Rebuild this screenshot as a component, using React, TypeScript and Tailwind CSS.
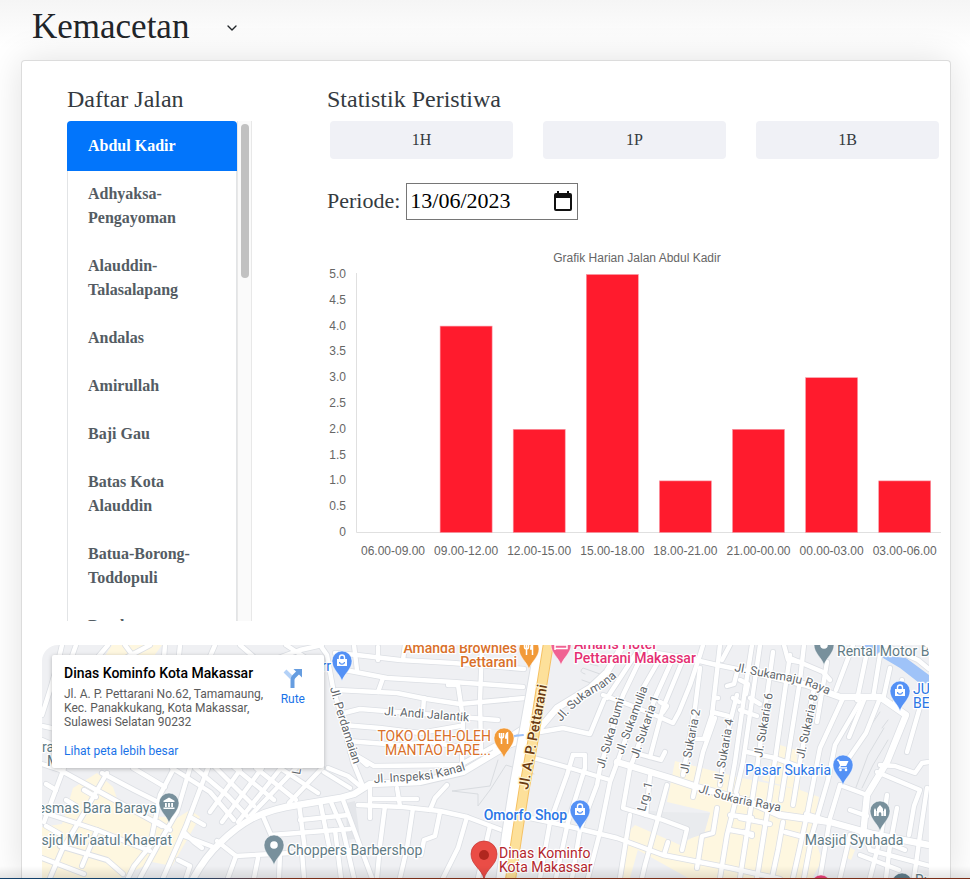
import React, { useState } from "react";
import { ChevronDown } from "lucide-react";

const streets = [
  "Abdul Kadir",
  "Adhyaksa-Pengayoman",
  "Alauddin-Talasalapang",
  "Andalas",
  "Amirullah",
  "Baji Gau",
  "Batas Kota Alauddin",
  "Batua-Borong-Toddopuli",
  "Batalyon",
];

const data = [
  { label: "06.00-09.00", value: 0 },
  { label: "09.00-12.00", value: 4 },
  { label: "12.00-15.00", value: 2 },
  { label: "15.00-18.00", value: 5 },
  { label: "18.00-21.00", value: 1 },
  { label: "21.00-00.00", value: 2 },
  { label: "00.00-03.00", value: 3 },
  { label: "03.00-06.00", value: 1 },
];

const ticks = ["0", "0.5", "1.0", "1.5", "2.0", "2.5", "3.0", "3.5", "4.0", "4.5", "5.0"];

function BarChart() {
  const left = 29;
  const bottom = 286;
  const step = 25.8;
  const band = 73.1;
  return (
    <svg viewBox="0 0 615 316" className="mt-[26px] block w-full font-['Liberation_Sans',Arial,sans-serif] text-xs" role="img" aria-label="Grafik Harian">
      <text x="310" y="16" textAnchor="middle" fill="#666">Grafik Harian Jalan Abdul Kadir</text>
      {ticks.map((t, i) => (
        <text key={t} x="19" y={bottom + 4 - i * step} textAnchor="end" fill="#666">{t}</text>
      ))}
      <path d="M29.5 27V286.5H614" stroke="#e0e0e0" fill="none" />
      {data.map((d, i) => {
        const cx = left + 37 + i * band;
        return (
          <g key={d.label}>
            {d.value > 0 && (
              <rect x={cx - 26} y={bottom + 0.5 - d.value * 2 * step} width="52" height={d.value * 2 * step} fill="#ff1b2d" stroke="#f99aa6" strokeWidth="0.6" />
            )}
            <text x={cx} y="309" textAnchor="middle" fill="#666">{d.label}</text>
          </g>
        );
      })}
    </svg>
  );
}

const minorRoads = [
  // west of the canal
  "M42 764L60 770L80 781L120 803L162 826", "M62 645L58 662L50 690L42 715", "M76 645L70 662", "M108 645L92 664", "M125 645L142 668", "M165 645L163 670", "M180 645L178 665",
  "M150 645L118 662", "M215 645L205 668", "M240 645L262 664L300 650L322 645", "M286 645L312 662",
  "M42 740L56 746", "M42 726L60 730", "M64 768L52 800L44 822", "M42 812L73 822L97 830L150 851", "M102 773L134 790L160 803",
  "M107 773L84 813L62 850L50 878", "M133 768L165 787", "M174 768L160 795L150 846L134 866L128 878", "M42 858L84 874", "M60 846L107 860L123 874",
  "M97 830L82 866", "M190 768L177 812L158 845L140 878", "M208 768L186 826L163 878", "M172 768L210 792L234 820", "M195 768L228 796L247 816",
  "M215 767L254 806", "M234 767L274 800", "M256 768L296 800", "M280 768L318 793",
  "M210 812L240 770", "M222 822L262 768", "M238 822L281 768", "M251 815L296 768", "M289 803L322 768",
  "M324 772L350 788", "M190 817L204 825", "M184 832L194 842L202 848", "M158 822L170 830", "M184 836L216 848",
  "M46 784L56 790", "M84 790L96 797", "M66 800L76 806", "M46 826L60 834",
  "M217 841L236 856L228 878", "M236 856L290 853L354 850", "M258 858L254 878", "M280 854L279 878", "M302 852L304 878", "M262 814L271 835L350 829",
  "M299 804L305 850", "M320 801L330 851", "M300 820L348 815", "M331 802L343 830L354 878", "M343 800L356 835L372 878",
  "M328 768L348 776L360 786", "M178 860L190 866L186 878",
  // between the canal and Pettarani
  "M320 645L327 655L333 688L343 722L353 762L362 784", "M335 653L357 655L400 660L453 663L524 669", "M345 670L387 678L453 682L523 687",
  "M383 678L378 692", "M337 690L397 693L427 699L460 704L525 698", "M424 698L423 712", "M458 685L463 718L462 765", "M448 685L458 685", "M482 645L480 700L481 750",
  "M340 714L360 709L460 717L498 720", "M343 725L380 728L420 733L460 726", "M347 741L400 745L430 742L460 747", "M350 752L374 766L460 765L498 744L521 729",
  "M360 759L367 765", "M358 805L403 807L440 811L467 817L507 832", "M370 788L370 818", "M385 806L380 845L377 878", "M413 808L407 848L400 878", "M447 785L435 798L430 810",
  "M440 812L435 836L424 840L421 855", "M467 817L458 848L443 878", "M397 788L400 806", "M370 799L417 799", "M490 826L478 878",
  "M335 830L341 878", "M354 645L357 670", "M378 647L378 660", "M405 645L403 660", "M520 742L495 750",
  // Sukaria
  "M540 732L563 728L590 734L604 700", "M637 652L607 698", "M603 695L630 705L657 716L673 723L679 712L690 685L700 655L703 645",
  "M647 645L623 695L600 768L597 785L580 830L572 878", "M662 655L643 688L620 755L610 782L600 832L588 878", "M673 658L655 698L635 755L630 768",
  "M682 662L663 708L650 757", "M650 652L687 658L717 665L752 672", "M700 668L695 708L683 775", "M720 645L712 715L704 739L694 739", "M715 718L703 752L693 797",
  "M737 695L730 722L720 785", "M730 645L722 660", "M737 672L734 684L727 686", "M712 712L728 716", "M714 698L718 698", "M733 698L739 702", "M740 680L748 684L746 694",
  "M635 753L661 760L665 752", "M530 757L570 768L610 780", "M573 755L567 775L550 822L540 878", "M573 755L585 755L585 768L568 822L556 878",
  "M530 818L563 825L617 838L663 855L730 868L780 879", "M630 768L623 808L663 820L687 829L682 850", "M667 785L657 822L645 865L642 878", "M630 815L620 878",
  "M650 776L646 815", "M717 808L713 833L702 836L697 868", "M737 795L727 835L720 878", "M730 815L752 818", "M730 830L752 834", "M668 842L664 855",
  "M660 702L667 706L663 712", "M752 645L745 690L735 762L730 790", "M760 645L743 762L736 792", "M773 652L757 768L740 878", "M790 655L770 795L757 878",
  "M813 692L800 762L793 805", "M804 645L800 680L781 800", "M827 662L817 722", "M843 698L820 748L807 815L793 878", "M860 702L835 745L828 780L812 835L804 878", "M840 785L830 818L820 878",
  "M880 698L866 733L842 768", "M864 700L849 737", "M853 645L836 690", "M867 652L857 700", "M880 655L873 698", "M890 668L883 700", "M902 680L894 706", "M922 700L907 752",
  "M880 765L895 766L915 773L922 763L929 762", "M877 772L920 790L914 806L909 835", "M927 788L920 835L914 878", "M840 785L867 795", "M850 810L867 816",
  "M747 752L775 758L808 770", "M790 658L823 672L830 680", "M784 645L788 660L800 662", "M740 710L757 716", "M785 832L800 836", "M783 822L778 850L772 878",
  "M740 818L770 824", "M744 832L752 836", "M887 795L881 835L870 878", "M897 808L890 845L886 878", "M863 830L870 850L930 866", "M860 855L899 870", "M850 835L840 878", "M884 645L918 660L929 669",
  "M806 814L845 826L905 850", "M750 698L760 704",
];

const majorRoads = [
  "M193 879Q205 857 220 843Q236 827 253 818Q274 808 298 805L340 798L354 794L370 784L420 782L463 772L520 738",
  "M540 728L557 708L590 688L607 672L623 645",
  "M617 762L670 778L697 787L750 802L780 815L830 822L873 834L929 845",
  "M752 672L807 685L840 697L880 697L906 715L887 762L867 795L863 835",
];

const pinPath = "M0 20C-2 13 -10 8 -10 0A10 10 0 1 1 10 0C10 8 2 13 0 20Z";

function Pin({ x, y, color, kind }: { x: number; y: number; color: string; kind: string }) {
  return (
    <g transform={`translate(${x} ${y})`}>
      <path d={pinPath} fill={color} stroke="#fff" strokeWidth="0.5" />
      {kind === "bag" && (
        <g>
          <path d="M-5 -2H5V5H-5Z" fill="#fff" />
          <path d="M-2.5 -2V-3.5A2.5 2.5 0 0 1 2.5 -3.5V-2" fill="none" stroke="#fff" strokeWidth="1.4" />
          <path d="M-2.5 1A2.5 2.2 0 0 0 2.5 1" fill="none" stroke={color} strokeWidth="1.2" />
        </g>
      )}
      {kind === "food" && (
        <g fill="none" stroke="#fff">
          <path d="M-4.5 -5V-2Q-4.5 0 -2.5 0Q-0.5 0 -0.5 -2V-5M-2.5 -5V6" strokeWidth="1.5" />
          <path d="M3.5 6V-5Q1.8 -4 1.8 0H3.5" strokeWidth="1.5" fill="#fff" />
        </g>
      )}
      {kind === "cart" && (
        <g fill="#fff">
          <path d="M-6 -5.5H-4L-3.3 -4H5.5L3.2 1H-2L-2.7 2.2H4V3.5H-4.8L-3 0.2L-5 -4.2H-6Z" />
          <circle cx="-2.5" cy="5" r="1.3" />
          <circle cx="3" cy="5" r="1.3" />
        </g>
      )}
      {kind === "museum" && <path d="M-5.5 -2.2L0 -5.5L5.5 -2.2V-1H-5.5ZM-4 0H-2.2V4H-4ZM-0.9 0H0.9V4H-0.9ZM2.2 0H4V4H2.2ZM-5.5 4.6H5.5V6H-5.5Z" fill="#fff" />}
      {kind === "mosque" && <path d="M-6 5V-1L-5 -3L-4 -1V0H-3V-2Q-3 -3 0 -6Q3 -3 3 -2V0H4V-1L5 -3L6 -1V5H1.3V2.5Q1.3 1.5 0 1Q-1.3 1.5 -1.3 2.5V5ZM-3.4 0V5H-3V0ZM3 0V5H3.4V0Z" fill="#fff" />}
      {kind === "dot" && <circle r="3.8" fill="#fff" />}
      {kind === "bed" && <path d="M-6 -4V5M-6 3.5H6V0H-6M-3 -1H-1" stroke="#fff" strokeWidth="1.5" fill="none" />}
    </g>
  );
}

const grey = "#5f7b85";
const blue = "#2a76e5";
const orange = "#d9702a";

const places = [
  { t: "Amanda Brownies", x: 517, y: 653, c: orange, a: "end", w: 500 },
  { t: "Pettarani", x: 517, y: 667, c: orange, a: "end", w: 500 },
  { t: "TOKO OLEH-OLEH", x: 491, y: 741, c: orange, a: "end", w: 400 },
  { t: "MANTAO PARE...", x: 491, y: 755, c: orange, a: "end", w: 400 },
  { t: "Amaris Hotel", x: 574, y: 649, c: "#e42f72", a: "start", w: 500 },
  { t: "Pettarani Makassar", x: 574, y: 663, c: "#e42f72", a: "start", w: 500 },
  { t: "Rental Motor B", x: 837, y: 656, c: grey, a: "start", w: 400 },
  { t: "JU", x: 913, y: 694, c: blue, a: "start", w: 400 },
  { t: "BE", x: 913, y: 708, c: blue, a: "start", w: 400 },
  { t: "Pasar Sukaria", x: 831, y: 775, c: blue, a: "end", w: 400 },
  { t: "Omorfo Shop", x: 567, y: 820, c: blue, a: "end", w: 500 },
  { t: "Masjid Syuhada", x: 854, y: 845, c: grey, a: "middle", w: 400 },
  { t: "esmas Bara Baraya", x: 157, y: 813, c: grey, a: "end", w: 400 },
  { t: "sjid Mir'aatul Khaerat", x: 172, y: 845, c: grey, a: "end", w: 400 },
  { t: "Choppers Barbershop", x: 287, y: 855, c: grey, a: "start", w: 400 },
  { t: "Dinas Kominfo", x: 499, y: 858, c: "#b3262e", a: "start", w: 400 },
  { t: "Kota Makassar", x: 499, y: 872, c: "#b3262e", a: "start", w: 400 },
  { t: "rr", x: 331, y: 671, c: blue, a: "end", w: 400 },
  { t: "ara", x: 54, y: 752, c: grey, a: "end", w: 400 },
  { t: "M", x: 47, y: 766, c: grey, a: "start", w: 400 },
  { t: "Ru", x: 915, y: 885, c: grey, a: "start", w: 400 },
] as const;

const roadNames = [
  { t: "Jl. Perdamaian", d: "M330 688Q336 712 344 735L356 772" },
  { t: "Jl. Andi Jalantik", d: "M384 715L474 722" },
  { t: "Jl. Inspeksi Kanal", d: "M374 783L424 780Q446 777 478 766" },
  { t: "Jl. Sukamana", d: "M561 722Q580 699 600 690Q612 682 622 672" },
  { t: "Jl. Suka Bumi", d: "M604 769L630 680" },
  { t: "Jl. Sukamulia", d: "M623 755L652 676" },
  { t: "Jl. Sukaria 1", d: "M638 759L665 680" },
  { t: "Jl. Sukaria 2", d: "M688 774L704 690" },
  { t: "Jl. Sukaria 4", d: "M722 784L737 700" },
  { t: "Jl. Sukaria 6", d: "M762 758L776 676" },
  { t: "Jl. Sukaria 8", d: "M804 759L822 676" },
  { t: "Jl. Sukamaju Raya", d: "M734 671L780 680Q808 683 840 701" },
  { t: "Jl. Sukaria Raya", d: "M698 792L735 803L800 815" },
  { t: "Lrg. 1", d: "M645 812L655 774" },
  { t: "Lrg. 2", d: "M300 775L306 740" },
];

function MapCanvas() {
  return (
    <svg className="absolute inset-0 h-full w-full font-[Roboto,sans-serif]" role="img" aria-label="Peta Makassar">
      <g transform="translate(-42 -645)">
        <rect x="0" y="600" width="2400" height="1200" fill="#eff0f3" />
        <g fill="#fef7e0">
          <path d="M112 645H162L154 656H105Z" />
          <path d="M73 788L97 773L113 787L120 807L153 816L177 818L190 810L200 817L172 866L152 862L120 878H42V827L62 824Z" />
          <path d="M675 761L737 777L752 780L800 790L819 797L812 830L822 860L812 879H690L620 840L635 825L680 845L705 830L710 812L667 802Z" />
          <path d="M780 745L796 750L800 790L762 780Z" />
          <path d="M845 845L855 850L851 860L844 856Z" />
          <path d="M624 845L640 842L630 878H618Z" />
        </g>
        <path d="M623 808L663 812L710 813L704 834L685 840L690 828Z" fill="#e9ebee" />
        <path d="M346 803L355 801L360 838L347 840Z" fill="#e4e6ea" />
        <path d="M861 645H881L888 656L906 658L929 675V684L918 682L900 668Z" fill="#9fc3f8" />
        <g fill="none" strokeLinejoin="round" strokeLinecap="round">
          <g stroke="#d9dce0" strokeWidth="1">
            <path d="M585 674Q578 672 583 668L600 674M582 680L596 685M598 666L590 664" />
            <path d="M884 728L868 755L855 790M888 740L873 765L862 788M882 728L888 720M850 760L861 740L880 712M498 760L490 786L452 791L478 794L478 806L490 790L506 765L534 774" />
          </g>
          <g stroke="#dcdfe4" strokeWidth="6">{minorRoads.map((d) => <path key={d} d={d} />)}</g>
          <g stroke="#dcdfe4" strokeWidth="8">{majorRoads.map((d) => <path key={d} d={d} />)}</g>
          <g stroke="#fff" strokeWidth="4.4">{minorRoads.map((d) => <path key={d} d={d} />)}</g>
          <g stroke="#fff" strokeWidth="6.4">{majorRoads.map((d) => <path key={d} d={d} />)}</g>
          <path d="M540 645L532 690L524 735L514 790L507 835L500 890" stroke="#dcdfe4" strokeWidth="12" />
          <path d="M540 645L532 690L524 735L514 790L507 835L500 890" stroke="#fff" strokeWidth="10" />
          <path d="M549 640L541 690L534 735L524 790L517 835L509 890" stroke="#f5c163" strokeWidth="11" />
          <path d="M549 640L541 690L534 735L524 790L517 835L509 890" stroke="#fde09a" strokeWidth="9" />
          <path d="M523 735L514 736" stroke="#9fc3f8" strokeWidth="2" />
        </g>
        <g fill="#61666b" stroke="#fff" strokeWidth="2.5" strokeLinejoin="round" paintOrder="stroke" fontSize="12">
          {roadNames.map((r, i) => (
            <React.Fragment key={r.t}>
              <path id={`road-${i}`} d={r.d} fill="none" stroke="none" />
              <text><textPath href={`#road-${i}`}>{r.t}</textPath></text>
            </React.Fragment>
          ))}
          <path id="pettarani" d="M528 790L538 735L552 660" fill="none" stroke="none" />
          <text fill="#6b3a10" stroke="#fff3d0" fontSize="14" fontWeight="500"><textPath href="#pettarani">Jl. A. P. Pettarani</textPath></text>
        </g>
        <Pin x={342} y={661} color="#5491f5" kind="bag" />
        <Pin x={529} y={649} color="#f29a38" kind="food" />
        <Pin x={504} y={738} color="#f29a38" kind="food" />
        <Pin x={561} y={645} color="#f06292" kind="bed" />
        <Pin x={580} y={810} color="#5491f5" kind="bag" />
        <Pin x={824} y={645} color="#78909c" kind="dot" />
        <Pin x={900} y={691} color="#5491f5" kind="bag" />
        <Pin x={843} y={765} color="#5491f5" kind="cart" />
        <Pin x={880} y={811} color="#78909c" kind="mosque" />
        <Pin x={169} y={803} color="#78909c" kind="museum" />
        <Pin x={274} y={845} color="#78909c" kind="dot" />
        <Pin x={821} y={885} color="#ec407a" kind="bed" />
        <Pin x={902} y={883} color="#607d8b" kind="dot" />
        <path d="M484 879C482 869 471 865 471 854A13 13 0 1 1 497 854C497 865 486 869 484 879Z" fill="#ea4d46" stroke="#c5322f" strokeWidth="0.7" />
        <circle cx="484" cy="855" r="5" fill="#b1271f" />
        <g stroke="#fff" strokeWidth="2.5" strokeLinejoin="round" paintOrder="stroke" fontSize="14">
          {places.map((p) => (
            <text key={p.t + p.y} x={p.x} y={p.y} fill={p.c} textAnchor={p.a} fontWeight={p.w}>{p.t}</text>
          ))}
        </g>
      </g>
    </svg>
  );
}

export default function App() {
  const [active, setActive] = useState("Abdul Kadir");
  return (
    <div className="flex min-h-screen flex-col overflow-hidden bg-white bg-linear-to-b from-[#f5f5f5] to-white to-[48px] font-['Liberation_Serif','Times_New_Roman',serif] text-[#343a40]">
      <header className="flex h-[60px] items-center pb-1.5 pl-8">
        <div className="relative text-[#212529]">
          <select aria-label="Kategori" className="block w-[212px] appearance-none bg-transparent p-0 text-[35px] leading-[42px]">
            <option>Kemacetan</option>
          </select>
          <ChevronDown className="pointer-events-none absolute top-3.5 right-1 size-4" strokeWidth={2} />
        </div>
      </header>

      <main className="mr-[19px] ml-[21px] flex flex-1 flex-col rounded-t border border-b-0 border-[#dcdcdc] bg-white shadow-[0_0_36px_rgba(0,0,0,0.12)]">
        <div className="flex gap-[75px] pt-6 pr-2 pl-[45px]">
          <section className="w-[185px] shrink-0">
            <h2 className="mb-2 text-2xl leading-7">Daftar Jalan</h2>
            <div className="flex h-[500px] overflow-hidden">
              <ul className="w-[170px] overflow-y-auto rounded-t [scrollbar-width:none]">
                {streets.map((s) => (
                  <li key={s} className="first:pb-0 last:pb-0">
                    <button
                      onClick={() => setActive(s)}
                      className={
                        active === s
                          ? "relative -mb-px block w-full bg-[#0275fb] px-[21px] py-[13px] text-left leading-6 font-bold text-white"
                          : "block w-full border-x border-[#e2e4e6] px-5 py-3 text-left leading-6 font-bold text-[#545c63]"
                      }
                    >
                      {s}
                    </button>
                  </li>
                ))}
              </ul>
              <div className="w-[15px] border-x border-[#e8e8e8] bg-[#fafafa] pt-[3px]">
                <div className="mx-auto h-[154px] w-2 rounded-full bg-[#c1c1c1]" />
              </div>
            </div>
          </section>

          <section className="min-w-0 flex-1">
            <h2 className="mb-2 text-2xl leading-7">Statistik Peristiwa</h2>
            <div className="grid grid-cols-3 gap-[30px] px-[3px]">
              <button className="rounded bg-[#f0f1f6] py-[7px] leading-6">1H</button>
              <button className="rounded bg-[#f0f1f6] py-[7px] leading-6">1P</button>
              <button className="rounded bg-[#f0f1f6] py-[7px] leading-6">1B</button>
            </div>
            <div className="mt-6 flex items-center gap-1.5 text-[22px]">
              <label htmlFor="periode" className="pb-0.5">Periode:</label>
              <div className="relative">
                <input id="periode" type="text" defaultValue="13/06/2023" className="block h-[37px] w-[172px] border border-[#767676] px-[3px] pb-0.5 text-black" />
                <svg className="pointer-events-none absolute top-2 right-1.5 h-5 w-[18px]" viewBox="0 0 18 20" fill="#111">
                  <path d="M2 2H3V0H5V2H13V0H15V2H16Q18 2 18 4V18Q18 20 16 20H2Q0 20 0 18V4Q0 2 2 2ZM2 7V18H16V7Z" fillRule="evenodd" />
                </svg>
              </div>
            </div>
            <BarChart />
          </section>
        </div>

        <div className="relative mx-5 mt-6 mr-[21px] flex-1 overflow-hidden rounded-tl-2xl rounded-tr-lg font-[Roboto,sans-serif]">
          <MapCanvas />
          <div className="relative mt-2.5 ml-2.5 flex w-[272px] justify-between rounded-xs bg-white py-2.5 pr-3 pl-3 text-xs leading-[14px] shadow-[0_1px_4px_rgba(0,0,0,0.25)]">
            <div className="whitespace-nowrap">
              <h3 className="mb-1.5 text-sm leading-4 font-medium text-black">Dinas Kominfo Kota Makassar</h3>
              <p className="text-[#5b5b5b]">
                Jl. A. P. Pettarani No.62, Tamamaung,
                <br />
                Kec. Panakkukang, Kota Makassar,
                <br />
                Sulawesi Selatan 90232
              </p>
              <a href="#peta" className="mt-[15px] block text-[#1a73e8]">Lihat peta lebih besar</a>
            </div>
            <a href="#rute" className="mr-[7px] flex flex-col items-center gap-1 pt-[3px] text-[#1a73e8]">
              <svg className="h-5 w-5" viewBox="0 0 20 20">
                <path d="M2 3L9 10" stroke="#b3d1f7" strokeWidth="4" />
                <path d="M9.500 20V12Q9.500 10 11 8.500L15 4.500" stroke="#669de0" strokeWidth="4" fill="none" />
                <path d="M10.500 1H19V9.500Z" fill="#669de0" />
              </svg>
              Rute
            </a>
          </div>
        </div>
      </main>
      <div className="pointer-events-none fixed inset-x-0 bottom-0">
        <div className="h-3 bg-linear-to-b from-transparent to-black/10" />
        <div className="h-px bg-linear-to-r from-[#12406b] from-20% to-[#7a2e18] to-30%" />
      </div>
    </div>
  );
}
